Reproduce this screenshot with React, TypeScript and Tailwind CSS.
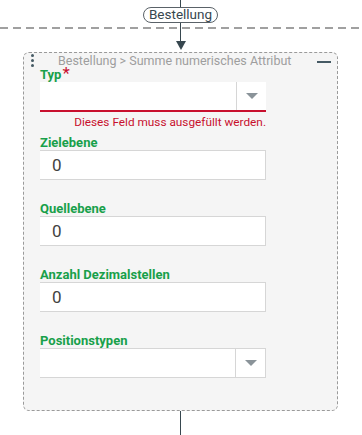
import React from 'react';

const Caret = () => (
  <svg width="12" height="6" viewBox="0 0 12 6" className="block">
    <path d="M0 0 L12 0 L6 6 Z" fill="#8a9399" />
  </svg>
);

interface FieldProps {
  label: string;
  value?: string;
  select?: boolean;
  className?: string;
}

const Field = ({ label, value, select, className = '' }: FieldProps) => (
  <div className={className}>
    <div className="h-[14px] text-[13px] leading-[14px] font-bold text-[#18a04a]">{label}</div>
    <div className="flex h-[30px] w-[226px] bg-white border-y border-r border-[#d6d6d6]">
      <div className="flex-1 pl-[12px] text-[17px] leading-[28px] text-[#424242]">{value}</div>
      {select && (
        <div className="flex w-[30px] items-center justify-center border-l border-[#d6d6d6]">
          <Caret />
        </div>
      )}
    </div>
  </div>
);

export default function App() {
  return (
    <div className="relative h-[435px] w-[362px] overflow-hidden bg-white font-['Roboto',sans-serif]">
      {/* swimlane separator */}
      <div className="absolute left-0 right-0 top-[27px] h-[2px] bg-[repeating-linear-gradient(90deg,#a0a0a0_0_8px,transparent_8px_13px)]" />

      <div className="relative ml-[23px] flex w-[315px] flex-col items-center">
        <div className="h-[7px] w-px bg-[#37474f]" />
        <div className="flex h-[16px] items-center rounded-full border border-[#5a6268] bg-white px-[5px] text-[13.5px] leading-none text-[#37474f]">
          Bestellung
        </div>
        <div className="relative z-10 h-[18px] w-px bg-[#37474f]" />
        <div className="h-0 w-0 border-x-[5px] border-t-[9px] border-x-transparent border-t-[#37474f]" />

        <div className="mt-[2px] w-full rounded-[6px] border border-dashed border-[#9a9a9a] bg-[#f5f5f5] pb-[32px]">
          <div className="flex h-[14px] items-center">
            <div className="ml-[6px] flex w-[4px] flex-col items-center gap-[2px]">
              <span className="h-[3px] w-[3px] rounded-full bg-[#455a64]" />
              <span className="h-[3px] w-[3px] rounded-full bg-[#455a64]" />
              <span className="h-[3px] w-[3px] rounded-full bg-[#455a64]" />
            </div>
            <div className="ml-[24px] flex-1 whitespace-nowrap text-[12.5px] leading-[13px] text-[#9e9e9e]">
              Bestellung &gt; Summe numerisches Attribut
            </div>
            <div className="mr-[6px] mt-[4px] h-[2px] w-[14px] bg-[#455a64]" />
          </div>

          <div className="pl-[16px]">
            <div className="flex h-[15px] items-end text-[13px] leading-[14px] font-bold text-[#18a04a]">
              Typ<span className="ml-[1px] self-start text-[17px] leading-[12px] font-normal text-[#c8102e]">*</span>
            </div>
            <div className="flex h-[30px] w-[226px] bg-white border-b-2 border-[#c8102e]">
              <div className="flex-1" />
              <div className="flex w-[30px] items-center justify-center border-l border-[#d6d6d6]">
                <Caret />
              </div>
            </div>
            <div className="mt-[3px] w-[226px] whitespace-nowrap text-right text-[11.8px] leading-[14px] text-[#c8102e]">
              Dieses Feld muss ausgefüllt werden.
            </div>

            <Field className="mt-[7px]" label="Zielebene" value="0" />
            <Field className="mt-[22px]" label="Quellebene" value="0" />
            <Field className="mt-[22px]" label="Anzahl Dezimalstellen" value="0" />
            <Field className="mt-[22px]" label="Positionstypen" select />
          </div>
        </div>

        <div className="h-[30px] w-px bg-[#37474f]" />
      </div>
    </div>
  );
}
